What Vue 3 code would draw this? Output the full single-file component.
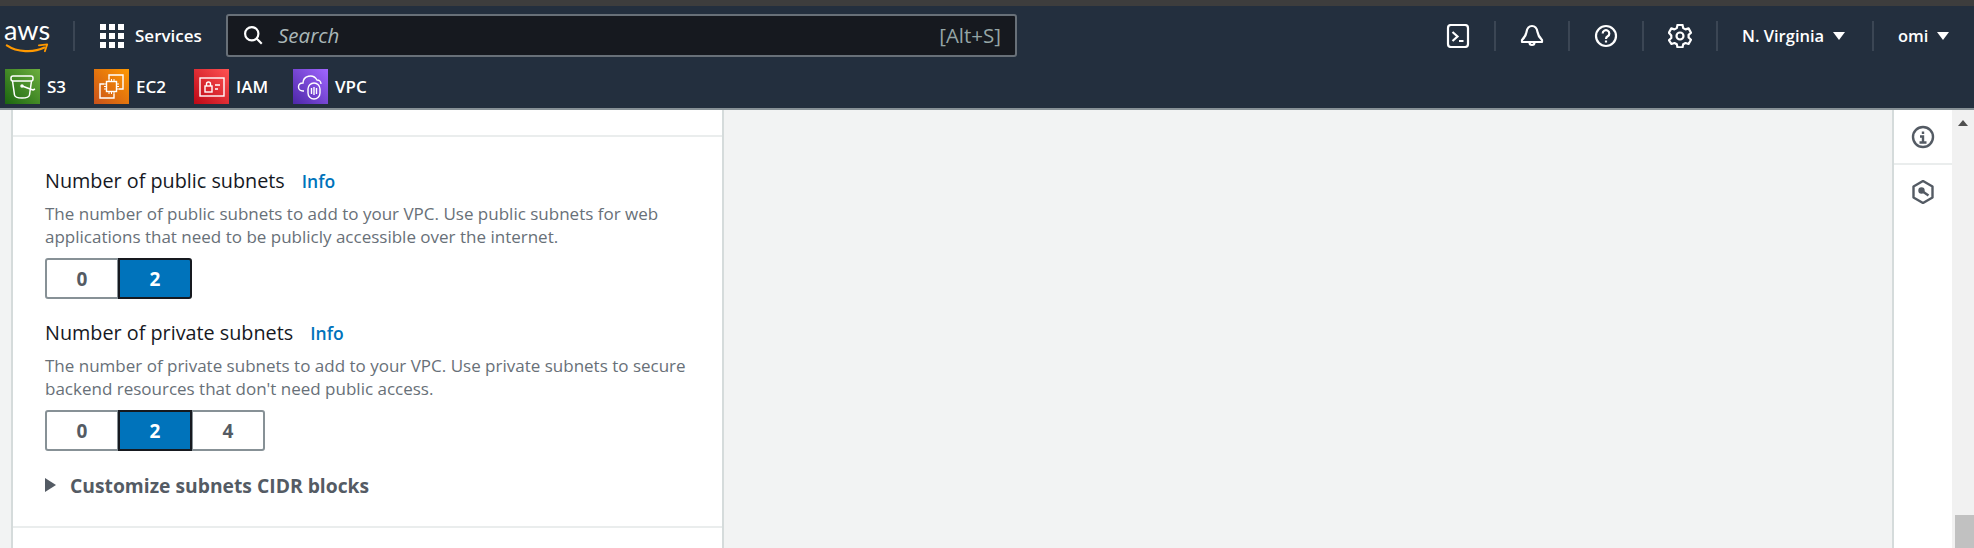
<script setup>
const services = [
  { name: 'S3', tone: 's3', width: 89 },
  { name: 'EC2', tone: 'ec2', width: 100 },
  { name: 'IAM', tone: 'iam', width: 99 },
  { name: 'VPC', tone: 'vpc', width: 80 },
]

const subnetGroups = [
  {
    title: 'Number of public subnets',
    lines: [
      'The number of public subnets to add to your VPC. Use public subnets for web',
      'applications that need to be publicly accessible over the internet.',
    ],
    options: ['0', '2'],
    selected: '2',
  },
  {
    title: 'Number of private subnets',
    lines: [
      'The number of private subnets to add to your VPC. Use private subnets to secure',
      "backend resources that don't need public access.",
    ],
    options: ['0', '2', '4'],
    selected: '2',
  },
]
</script>

<template>
  <div class="page">
    <div class="strip" />
    <header class="nav">
      <div class="nav-top">
        <div class="logo">
          <span class="logo-text">aws</span>
          <svg class="smile" viewBox="0 0 46 12" width="46" height="12">
            <path d="M1 2.500C12 10 30 11 42 5" fill="none" stroke="#f90" stroke-width="2.400" stroke-linecap="round" />
            <path d="M36 2.500L45 1.500L42.500 9" fill="none" stroke="#f90" stroke-width="2" stroke-linejoin="round" stroke-linecap="round" />
          </svg>
        </div>
        <span class="sep sep-logo" />
        <svg class="grid-icon" viewBox="0 0 24 24" width="24" height="24" fill="#fff">
          <rect v-for="n in 9" :key="n" :x="(n - 1) % 3 * 9" :y="Math.floor((n - 1) / 3) * 9" width="6" height="6" />
        </svg>
        <span class="services">Services</span>
        <div class="search">
          <svg viewBox="0 0 24 24" width="20" height="20" fill="none" stroke="#fff" stroke-width="2.600">
            <circle cx="10.500" cy="10.500" r="8" />
            <path d="M16 16l6.500 6.500" />
          </svg>
          <span class="search-text">Search</span>
          <span class="shortcut">[Alt+S]</span>
        </div>
        <div class="nav-right">
          <svg class="nav-icon" viewBox="0 0 24 24" width="24" height="24" fill="none" stroke="#fff" stroke-width="2.200">
            <rect x="2" y="1" width="20" height="22" rx="3" />
            <path d="M6.500 8l5 4.500-5 4.500M13 17h4.500" />
          </svg>
          <span class="sep" />
          <svg class="nav-icon" viewBox="0 0 24 24" width="24" height="24" fill="none" stroke="#fff" stroke-width="2.200" stroke-linejoin="round">
            <path d="M12 2c-3.500 0-5 3-5.500 6-.4 3-1.500 5-4.500 8v2h20v-2c-3-3-4.100-5-4.500-8C17 5 15.500 2 12 2z" />
            <path d="M9.500 18.500a2.500 2.500 0 0 0 5 0" />
          </svg>
          <span class="sep" />
          <svg class="nav-icon" viewBox="0 0 24 24" width="24" height="24" fill="none" stroke="#fff" stroke-width="2.200">
            <circle cx="12" cy="12" r="10" />
            <path d="M8.700 9.500a3.300 3.300 0 1 1 5 2.800c-1.100.7-1.700 1.300-1.700 2.700M12 16.500v2" />
          </svg>
          <span class="sep" />
          <svg class="nav-icon" viewBox="0 0 24 24" width="24" height="24" fill="none" stroke="#fff" stroke-width="2.200" stroke-linejoin="round">
            <path d="M9.500 1.500h5l.7 3.200 2.300 1.300 3.100-1 2.400 4.300-2.400 2.200v2.600l2.400 2.200-2.400 4.300-3.100-1-2.300 1.300-.7 3.100h-5l-.7-3.100-2.300-1.300-3.100 1L.9 16.800l2.400-2.200v-2.600L.9 9.300l2.400-4.300 3.100 1 2.400-1.300z" transform="translate(0 -.6)" />
            <circle cx="12" cy="12" r="3.500" />
          </svg>
          <span class="sep" />
          <span class="menu menu-region">N. Virginia<i class="caret" /></span>
          <span class="sep" />
          <span class="menu menu-user">omi<i class="caret" /></span>
        </div>
      </div>
      <div class="nav-bottom">
        <div
          v-for="service in services"
          :key="service.name"
          class="shortcut-item"
          :style="{ width: service.width + 'px' }"
        >
          <span class="tile" :class="service.tone">
            <svg v-if="service.name === 'S3'" viewBox="0 0 35 35" width="35" height="35" fill="none" stroke="#fff" stroke-width="1.500" stroke-linejoin="round">
              <rect x="6" y="7" width="22" height="5" rx="2" />
              <path d="M7.500 12l2 14c.3 2 2.500 3 7.500 3s7.200-1 7.500-3l2-14" />
              <circle cx="17" cy="17" r="1" />
              <path d="M17 17l11 4 2-1" />
            </svg>
            <svg v-else-if="service.name === 'EC2'" viewBox="0 0 35 35" width="35" height="35" fill="none" stroke="#fff" stroke-width="1.400">
              <path d="M15 10V6h14v14h-4M10 15H6v14h14v-4" />
              <rect x="12.500" y="12.500" width="10" height="10" />
              <path d="M15 10v2.500M17.500 10v2.500M20 10v2.500M15 22.500V25M17.500 22.500V25M20 22.500V25M10 15h2.500M10 17.500h2.500M10 20h2.500M22.500 15H25M22.500 17.500H25M22.500 20H25" stroke-width="1" />
            </svg>
            <svg v-else-if="service.name === 'IAM'" viewBox="0 0 35 35" width="35" height="35" fill="none" stroke="#fff" stroke-width="1.400">
              <rect x="6" y="9" width="24" height="18" />
              <rect x="11" y="17" width="7" height="6" />
              <path d="M12.500 17v-2a2 2 0 0 1 4 0v2M21 16h5M21 20h3" />
            </svg>
            <svg v-else viewBox="0 0 35 35" width="35" height="35" fill="none" stroke="#fff" stroke-width="1.400">
              <path d="M11 22H10c-6 0-6-8 0-8 0-7 10-10 14-3 2.500 0 4 2 4 4" />
              <rect x="15" y="14" width="12" height="16" rx="6" />
              <path d="M21 18v8M18.500 19v6M23.500 19v6" />
            </svg>
          </span>
          <span class="shortcut-name">{{ service.name }}</span>
        </div>
      </div>
    </header>

    <main class="main">
      <section class="panel">
        <div class="panel-top" />
        <div class="panel-body">
          <div v-for="group in subnetGroups" :key="group.title" class="field">
            <div class="field-title">
              {{ group.title }}<a class="info">Info</a>
            </div>
            <p class="field-desc">
              <span v-for="line in group.lines" :key="line" class="desc-line">{{ line }}</span>
            </p>
            <div class="segments">
              <button
                v-for="option in group.options"
                :key="option"
                class="segment"
                :class="{ active: option === group.selected }"
              >
                {{ option }}
              </button>
            </div>
          </div>
          <div class="expander">
            <i class="expander-arrow" />
            <span>Customize subnets CIDR blocks</span>
          </div>
        </div>
        <div class="panel-end" />
      </section>

      <div class="blank" />

      <aside class="rail">
        <div class="rail-item">
          <svg viewBox="0 0 24 24" width="24" height="24" fill="none" stroke="#545b64" stroke-width="2.400">
            <circle cx="12" cy="12" r="10" />
            <path d="M12 6.500v2.500M9 11.500h3v6M8.500 17.500h7" />
          </svg>
        </div>
        <div class="rail-item">
          <svg viewBox="0 0 24 24" width="24" height="24" fill="none" stroke="#545b64" stroke-width="2.400" stroke-linejoin="round">
            <path d="M12 1l9.500 5.500v11L12 23l-9.500-5.500v-11z" />
            <circle cx="10.500" cy="10.500" r="2" fill="#545b64" />
            <path d="M11 11l6.500 4.500" />
          </svg>
        </div>
      </aside>

      <div class="scrollbar">
        <i class="scroll-up" />
        <div class="scroll-thumb" />
      </div>
    </main>
  </div>
</template>

<style scoped>
.page {
  width: 1974px;
  height: 548px;
  display: flex;
  flex-direction: column;
  overflow: hidden;
  background: #f2f3f3;
  font-family: "Open Sans", "Noto Sans", sans-serif;
}

.strip {
  height: 6px;
  background: #3d3d3d;
}

.nav {
  height: 104px;
  flex-shrink: 0;
  background: #232f3e;
  border-bottom: 2px solid #879196;
  box-sizing: border-box;
  color: #fff;
}

.nav-top {
  display: flex;
  align-items: center;
  height: 43px;
  margin-top: 8px;
  padding-left: 4px;
  padding-right: 24px;
}

.logo {
  width: 46px;
  height: 36px;
  display: flex;
  flex-direction: column;
  align-items: center;
}

.logo-text {
  font-family: Lato, sans-serif;
  font-size: 27px;
  line-height: 25px;
  height: 25px;
  margin-top: -1px;
  color: #fff;
}

.smile {
  margin-top: 1px;
}

.sep {
  width: 2px;
  height: 30px;
  background: #3b4654;
}

.sep-logo {
  margin: 0 25px 0 23px;
}

.grid-icon {
  flex-shrink: 0;
}

.services {
  margin-left: 11px;
  width: 91px;
  font-size: 17px;
  font-weight: 600;
}

.search {
  width: 791px;
  height: 43px;
  box-sizing: border-box;
  display: flex;
  align-items: center;
  padding: 0 14px 2px 15px;
  background: #16191f;
  border: 2px solid #687078;
  border-radius: 3px;
  font-size: 20.500px;
  color: #aab7b8;
}

.search svg {
  flex-shrink: 0;
}

.search-text {
  margin-left: 15px;
  font-style: italic;
  flex: 1;
}

.shortcut {
  color: #95a5a6;
}

.nav-right {
  display: flex;
  align-items: center;
  margin-left: auto;
  font-size: 16.500px;
  font-weight: 600;
}

.nav-right .sep {
  margin: 0 24px;
}

.nav-icon {
  flex-shrink: 0;
}

.menu {
  display: inline-flex;
  align-items: center;
  white-space: nowrap;
}

.menu-region {
  width: 106px;
}

.menu-user {
  width: 52px;
}

.caret {
  width: 0;
  height: 0;
  margin-left: 9px;
  border-left: 6px solid transparent;
  border-right: 6px solid transparent;
  border-top: 8px solid #fff;
}

.nav-bottom {
  display: flex;
  align-items: center;
  margin-top: 12px;
  padding-left: 5px;
}

.shortcut-item {
  display: flex;
  align-items: center;
  gap: 7px;
}

.tile {
  width: 35px;
  height: 35px;
  display: block;
  flex-shrink: 0;
}

.tile svg {
  display: block;
}

.s3 { background: linear-gradient(45deg, #1b660f, #6cae3e); }
.ec2 { background: linear-gradient(45deg, #c8511b, #f90); }
.iam { background: linear-gradient(45deg, #bd0816, #ff5252); }
.vpc { background: linear-gradient(45deg, #4d27a8, #a166ff); }

.shortcut-name {
  font-size: 17px;
  font-weight: 600;
}

.main {
  flex: 1;
  display: flex;
  min-height: 0;
}

.panel {
  width: 713px;
  flex-shrink: 0;
  margin-left: 11px;
  box-sizing: border-box;
  background: #fff;
  border-left: 2px solid #d5dbdb;
  border-right: 2px solid #d5dbdb;
  color: #16191f;
}

.panel-top {
  height: 25px;
  border-bottom: 2px solid #eaeded;
}

.panel-body {
  padding: 32px 32px 0;
}

.field {
  margin-bottom: 22px;
}

.field:last-of-type {
  margin-bottom: 20px;
}

.field-title {
  font-size: 19.800px;
  line-height: 24px;
  color: #16191f;
}

.info {
  margin-left: 17px;
  font-size: 17.500px;
  font-weight: 600;
  color: #0073bb;
}

.field-desc {
  margin: 9px 0 10px;
  font-size: 17px;
  line-height: 23px;
  color: #687078;
}

.desc-line {
  display: block;
  white-space: nowrap;
}

.segments {
  display: flex;
  width: fit-content;
  height: 41px;
}

.segment {
  width: 74px;
  margin-left: -1px;
  padding: 0;
  background: #fff;
  border: 2px solid #879196;
  font: 700 19px "Open Sans", sans-serif;
  color: #545b64;
}

.segment:first-child {
  margin-left: 0;
  border-radius: 3px 0 0 3px;
}

.segment:last-child {
  border-radius: 0 3px 3px 0;
}

.segment.active {
  position: relative;
  background: #0073bb;
  border-color: #16191f;
  color: #fff;
}

.expander {
  display: flex;
  align-items: center;
  height: 24px;
  font-size: 19.300px;
  font-weight: 700;
  color: #545b64;
}

.expander-arrow {
  width: 0;
  height: 0;
  margin-right: 14px;
  border-top: 7px solid transparent;
  border-bottom: 7px solid transparent;
  border-left: 11px solid #545b64;
}

.panel-end {
  height: 0;
  margin-top: 29px;
  border-top: 2px solid #eaeded;
}

.blank {
  flex: 1;
}

.rail {
  width: 60px;
  flex-shrink: 0;
  box-sizing: border-box;
  background: #fff;
  border-left: 2px solid #d5dbdb;
}

.rail-item {
  height: 53px;
  display: flex;
  align-items: center;
  justify-content: center;
  border-bottom: 2px solid #eaeded;
}

.rail-item + .rail-item {
  border-bottom: 0;
}

.scrollbar {
  width: 22px;
  flex-shrink: 0;
  display: flex;
  flex-direction: column;
  justify-content: space-between;
  align-items: flex-end;
  background: #f1f1f1;
}

.scroll-up {
  width: 0;
  height: 0;
  margin: 10px 6px 0 0;
  border-left: 5px solid transparent;
  border-right: 5px solid transparent;
  border-bottom: 6px solid #505050;
}

.scroll-thumb {
  width: 19px;
  height: 33px;
  background: #c1c1c1;
}
</style>
